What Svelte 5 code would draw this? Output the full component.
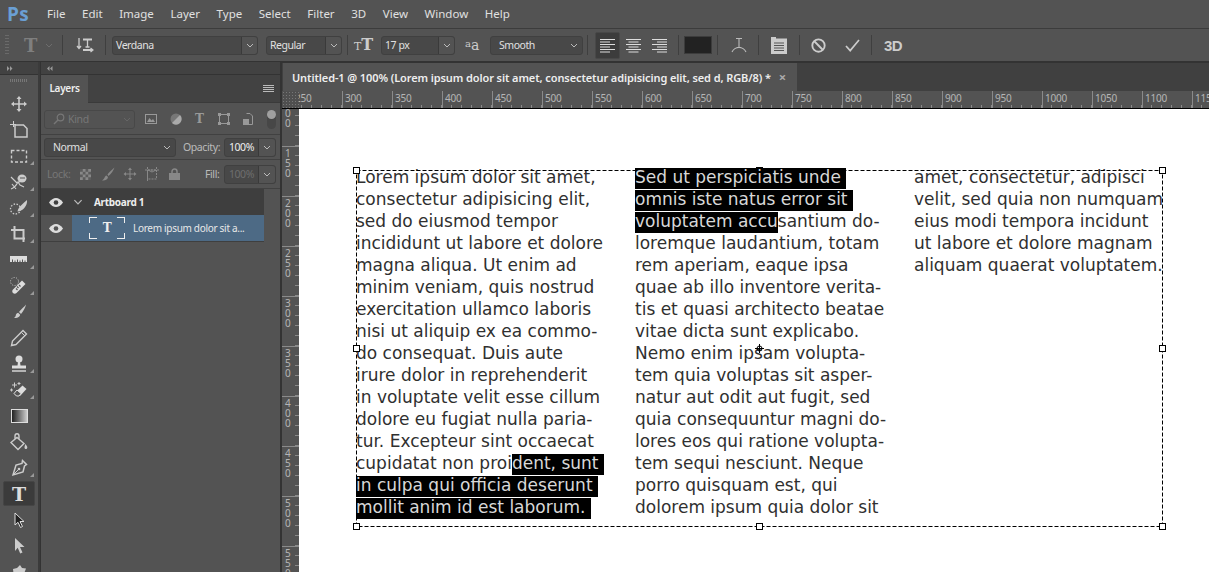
<script>
  const menus = ['File','Edit','Image','Layer','Type','Select','Filter','3D','View','Window','Help'];
  const hTicks = [250,300,350,400,450,500,550,600,650,700,750,800,850,900,950,1000,1050,1100,1150];
  const vTicks = ['100','150','200','250','300','350','400','450','500','550'];
  const columns = [
    [
      ['Lorem ipsum dolor sit amet,'],['consectetur adipisicing elit,'],['sed do eiusmod tempor'],['incididunt ut labore et dolore'],
      ['magna aliqua. Ut enim ad'],['minim veniam, quis nostrud'],['exercitation ullamco laboris'],['nisi ut aliquip ex ea commo-'],
      ['do consequat. Duis aute'],['irure dolor in reprehenderit'],['in voluptate velit esse cillum'],['dolore eu fugiat nulla paria-'],
      ['tur. Excepteur sint occaecat'],['cupidatat non proi','dent, sunt '],['','in culpa qui officia deserunt '],['','mollit anim id est laborum. ']
    ],
    [
      ['','Sed ut perspiciatis unde '],['','omnis iste natus error sit '],['','voluptatem accu','santium do-'],['loremque laudantium, totam'],
      ['rem aperiam, eaque ipsa'],['quae ab illo inventore verita-'],['tis et quasi architecto beatae'],['vitae dicta sunt explicabo.'],
      ['Nemo enim ipsam volupta-'],['tem quia voluptas sit asper-'],['natur aut odit aut fugit, sed'],['quia consequuntur magni do-'],
      ['lores eos qui ratione volupta-'],['tem sequi nesciunt. Neque'],['porro quisquam est, qui'],['dolorem ipsum quia dolor sit']
    ],
    [
      ['amet, consectetur, adipisci'],['velit, sed quia non numquam'],['eius modi tempora incidunt'],['ut labore et dolore magnam'],['aliquam quaerat voluptatem.']
    ]
  ];
  const handles = [[57.5,61.5],[460.5,61.5],[863.5,61.5],[57.5,239.5],[863.5,239.5],[57.5,417.5],[460.5,417.5],[863.5,417.5]];
</script>

<div class="app">
  <header class="menubar">
    <span class="logo">Ps</span>
    <nav class="menus">
      {#each menus as m}<span>{m}</span>{/each}
    </nav>
  </header>

  <div class="options">
    <span class="grip"></span>
    <span class="o-tool">T</span>
    <svg class="chev faded o-chev" viewBox="0 0 8 5"><path d="M1 1l3 3 3-3"/></svg>
    <i class="sep s1"></i>
    <svg class="o-orient" width="18" height="18" viewBox="0 0 18 18"><path d="M3 2v10M1 10l2 2.500L5 10M11.500 3v8M9.500 11h4" fill="none" stroke="#ccc" stroke-width="1.300"/><path d="M7 3.500h9M7 14h9" fill="none" stroke="#ccc" stroke-width="2"/><path d="M14.500 12l2.500 2-2.500 2" fill="none" stroke="#ccc" stroke-width="1.200"/></svg>
    <i class="sep s2"></i>
    <div class="select font"><span>Verdana</span><b><svg class="chev" viewBox="0 0 8 5"><path d="M1 1l3 3 3-3"/></svg></b></div>
    <div class="select style"><span>Regular</span><b><svg class="chev" viewBox="0 0 8 5"><path d="M1 1l3 3 3-3"/></svg></b></div>
    <i class="sep s3"></i>
    <span class="o-size"><small>T</small>T</span>
    <div class="select size"><span>17 px</span><b><svg class="chev" viewBox="0 0 8 5"><path d="M1 1l3 3 3-3"/></svg></b></div>
    <span class="o-aa"><small>a</small>a</span>
    <div class="select smooth"><span>Smooth</span><svg class="chev" viewBox="0 0 8 5"><path d="M1 1l3 3 3-3"/></svg></div>
    <i class="sep s4"></i>
    <div class="align active"><svg width="15" height="15" viewBox="0 0 15 15"><path d="M0 1.500h15M0 4h10M0 6.500h15M0 9h10M0 11.500h15M0 14h10"/></svg></div>
    <div class="align"><svg width="15" height="15" viewBox="0 0 15 15"><path d="M0 1.500h15M2.500 4h10M0 6.500h15M2.500 9h10M0 11.500h15M2.500 14h10"/></svg></div>
    <div class="align"><svg width="15" height="15" viewBox="0 0 15 15"><path d="M0 1.500h15M5 4h10M0 6.500h15M5 9h10M0 11.500h15M5 14h10"/></svg></div>
    <i class="sep s5"></i>
    <span class="swatch"></span>
    <i class="sep s6"></i>
    <svg class="o-warp" width="16" height="20" viewBox="0 0 16 20"><path d="M5 3.500h6M8 3.500v9M6 12.500h4M1 17c2-4 4-4.500 7-4.500s5 .5 7 4.500" fill="none" stroke="#bbb" stroke-width="1.100"/></svg>
    <i class="sep s7"></i>
    <svg class="o-panel" width="16" height="17" viewBox="0 0 16 17"><path d="M0 0h5v1.500h11V17H0z" fill="#ccc"/><path d="M3 6h10M3 8.500h10M3 11h10M3 13.500h10" stroke="#555" stroke-width="1"/></svg>
    <i class="sep s8"></i>
    <svg class="o-cancel" width="15" height="15" viewBox="0 0 16 16"><circle cx="8" cy="8" r="6.600" fill="none" stroke="#ccc" stroke-width="2"/><path d="M3.500 3.500l9 9" stroke="#ccc" stroke-width="2"/></svg>
    <svg class="o-check" width="15" height="13" viewBox="0 0 16 14"><path d="M1 7.500L5.500 12.500 15 1" fill="none" stroke="#ccc" stroke-width="1.800"/></svg>
    <i class="sep s9"></i>
    <span class="o-3d">3D</span>
  </div>

  <div class="body">
    <aside class="rail">
      <div class="strip"><svg width="6" height="5" viewBox="0 0 6 5"><path d="M0 0l2.500 2.500L0 5zM3 0l2.500 2.500L3 5z" fill="#999"/></svg></div>
      <div class="rail-grip"></div>
      <div class="tool"><svg viewBox="0 0 20 20"><path d="M10 2l2.500 3h-1.700v4.200H15V7.500l3 2.500-3 2.500v-1.700h-4.200V15h1.700L10 18l-2.500-3h1.700v-4.200H5v1.700L2 10l3-2.500v1.700h4.200V5H7.500z" fill="#ccc"/></svg></div>
      <div class="tool"><svg viewBox="0 0 20 20"><path d="M6 5h8.500L18 8.500V17H6z" fill="none" stroke="#ccc" stroke-width="1.500"/><path d="M1 4.500h6M4.500 1v6" stroke="#ccc"/></svg></div>
      <div class="tool more"><svg viewBox="0 0 20 20"><rect x="2.500" y="4.500" width="15" height="11.500" fill="none" stroke="#ccc" stroke-width="1.400" stroke-dasharray="3 2"/></svg></div>
      <div class="tool more"><svg viewBox="0 0 20 20"><ellipse cx="13" cy="6.500" rx="4.500" ry="4" fill="#ccc"/><path d="M11 6h5" stroke="#555"/><path d="M2 5l6 6 4-2M2 17c3-1 5-3 7-7l2 3 4 2M3 12l4 5" fill="none" stroke="#ccc" stroke-width="1.200"/></svg></div>
      <div class="tool more"><svg viewBox="0 0 20 20"><circle cx="6.500" cy="11" r="5" fill="none" stroke="#ccc" stroke-width="1.300" stroke-dasharray="1.500 1.500"/><path d="M18 2c.5 4-2 8-5 10-1.500 1-3 1-4.500 1.500.5-2 1-3.500 3-5.500 2-2 4-4 6.500-6z" fill="#ccc"/></svg></div>
      <div class="tool more"><svg viewBox="0 0 20 20"><path d="M2 6h4M5.500 2v12.500H16M6 6h8.500v12" fill="none" stroke="#ccc" stroke-width="2"/></svg></div>
      <div class="tool more"><svg viewBox="0 0 20 20"><path d="M1 6h17v6H1z" fill="#ddd"/><path d="M3.500 9.500V12M6 10.500V12M8.500 9.500V12M11 10.500V12M13.500 9.500V12M16 10.500V12" stroke="#555" stroke-width="1"/></svg></div>
      <div class="tool more"><svg viewBox="0 0 20 20"><circle cx="5.500" cy="5.500" r="4" fill="none" stroke="#ccc" stroke-dasharray="1 1.500"/><path d="M13 4.500l3.500 3.500-9 9c-1 1-2.500 1-3.500 0s-1-2.500 0-3.500z" fill="#ddd"/><path d="M8 10.500l1.500 1.500M10 9l1.500 1.500M7 12.500l1.500 1.500" stroke="#555" stroke-width="1.200"/></svg></div>
      <div class="tool"><svg viewBox="0 0 20 20"><path d="M17 2.500c-1.500 2-5 5-7 7.500l2 2c2-2.500 4.500-6.500 5-9.500zM9.200 10.800c-2 .5-2.200 1.800-2.500 3-.2 1-1 1.700-1.700 2 2.500.8 6-.5 6.200-3z" fill="#ccc"/></svg></div>
      <div class="tool"><svg viewBox="0 0 20 20"><path d="M14 2.500l3.500 3.500L7 16.500 2.500 17.500l1-4.500z" fill="none" stroke="#ccc" stroke-width="1.400"/><path d="M12.500 4.500L16 8" stroke="#ccc"/></svg></div>
      <div class="tool more"><svg viewBox="0 0 20 20"><circle cx="10" cy="5" r="3.500" fill="#ddd"/><path d="M9 8h2l.5 3.500H17v3H3v-3h5.500z" fill="#ddd"/><path d="M3 17h14" stroke="#ddd" stroke-width="1.400"/></svg></div>
      <div class="tool more"><svg viewBox="0 0 20 20"><path d="M13.500 5.500l4 3.500-6.500 7H7.500l-2.500-2.500z" fill="#ddd"/><path d="M5 13.500l3-3.500 4 3.500-2 2.500H7.500z" fill="#555" stroke="#ddd"/><path d="M3 5h5M5.500 2.500v5M1 10h3M2.500 8.500v3M10 2v3M8.500 3.500h3" stroke="#ccc"/></svg></div>
      <div class="tool"><span class="gradient"></span></div>
      <div class="tool"><svg viewBox="0 0 20 20"><path d="M8 5.500l7 6-6 6-7-7zM6 7.500V4c0-3 4-3 4 0v3" fill="none" stroke="#ccc" stroke-width="1.400"/><path d="M16.500 12c1 1.500 2.500 3 1.500 4.500-1 1-2.500.5-2.500-1 0-1 .5-2.500 1-3.500z" fill="#ccc"/></svg></div>
      <div class="tool more"><svg viewBox="0 0 20 20"><path d="M13.500 2.500l4 4-2 1.500-1.500 6L4 17l3-10 6-1.500z" fill="none" stroke="#ccc" stroke-width="1.500"/><path d="M5 16l4.500-4.500" stroke="#ccc"/><circle cx="10" cy="11" r="1.300" fill="#ccc"/></svg></div>
      <div class="tool current"><span>T</span></div>
      <div class="tool"><svg viewBox="0 0 20 20"><path d="M6 3l9 8.500h-4l2.500 5-2 1-2.500-5.200L6 15z" fill="#222" stroke="#ddd"/></svg></div>
      <div class="tool"><svg viewBox="0 0 20 20"><path d="M6 2l9.500 9h-4.500l2.500 5.500-2.300 1-2.500-5.700L6 15z" fill="#ccc"/></svg></div>
      <div class="tool"><svg viewBox="0 0 20 20"><path d="M4 7l4-1 3-3 2 3 4 .5-1.500 4L17 14l-4 .5-2.500 3-3-2.500-4 .5 1-4z" fill="#ccc"/></svg></div>
    </aside>

    <section class="panel-col">
      <div class="strip"><svg width="6" height="5" viewBox="0 0 6 5"><path d="M2.500 0L0 2.500 2.500 5zM5.500 0L3 2.500 5.500 5z" fill="#999"/></svg></div>
      <div class="panel">
        <div class="tabs">
          <span class="ptab">Layers</span>
          <span class="hamburger"></span>
        </div>
        <div class="row filter">
          <div class="kind"><svg width="12" height="12" viewBox="0 0 12 12"><circle cx="7.500" cy="4.500" r="3.300" fill="none" stroke="#777" stroke-width="1.200"/><path d="M5 7l-4 4" stroke="#777" stroke-width="1.500"/></svg><span>Kind</span><svg class="chev kindchev" viewBox="0 0 8 5"><path d="M1 1l3 3 3-3"/></svg></div>
          <svg class="fi f-img" width="12" height="10" viewBox="0 0 12 10"><rect x=".5" y=".5" width="11" height="9" fill="none" stroke="#999"/><path d="M2 8l2.500-4 2 2.500 1.500-1.500 2 3z" fill="#999"/></svg>
          <svg class="fi f-adj" width="12" height="12" viewBox="0 0 12 12"><circle cx="6" cy="6" r="5.500" fill="#777"/><path d="M10 2a5.500 5.500 0 0 1-8 8z" fill="#aaa"/></svg>
          <span class="fi f-t">T</span>
          <svg class="fi f-tr" width="12" height="12" viewBox="0 0 12 12"><rect x="1.500" y="1.500" width="9" height="9" fill="none" stroke="#999"/><path d="M0 0h3v3H0zM9 0h3v3H9zM0 9h3v3H0zM9 9h3v3H9z" fill="#999"/></svg>
          <svg class="fi f-doc" width="10" height="12" viewBox="0 0 10 12"><path d="M3.500.5h3.500l2.500 2.500v8.500h-6" fill="none" stroke="#999"/><rect y="6" width="6" height="6" fill="#999"/></svg>
          <span class="toggle"></span>
        </div>
        <div class="row mode">
          <div class="select blend"><span>Normal</span><svg class="chev" viewBox="0 0 8 5"><path d="M1 1l3 3 3-3"/></svg></div>
          <span class="label opac">Opacity:</span>
          <div class="select pct"><span>100%</span><b><svg class="chev" viewBox="0 0 8 5"><path d="M1 1l3 3 3-3"/></svg></b></div>
        </div>
        <div class="row lock">
          <span class="label dim">Lock:</span>
          <span class="checker"></span>
          <svg class="li l-brush" width="14" height="14" viewBox="0 0 14 14"><path d="M13.500.5C11 3 8 5 6.500 7.500l1 1.500C10 7 12.500 3.500 13.500.5zM5.500 8.500c-2 .5-1.500 3-4.500 5 3 .5 6-1 6-3.500z" fill="#888"/></svg>
          <svg class="li l-move" width="14" height="14" viewBox="0 0 14 14"><path d="M7 .5l2 2.500H7.500v3.500H11V5l2.500 2L11 9V7.500H7.500V11H9l-2 2.500L5 11h1.500V7.500H3V9L.5 7 3 5v1.500h3.500V3H5z" fill="#888"/></svg>
          <svg class="li l-art" width="14" height="14" viewBox="0 0 14 14"><path d="M2.500 3h9v9h-9zM0 3h14M2.500 0v14M11.500 0v3" fill="none" stroke="#888" stroke-dasharray="2 1"/><path d="M3 3l4 2 4-2" stroke="#888" fill="none"/></svg>
          <svg class="li l-lock" width="11" height="12" viewBox="0 0 11 12"><path d="M3 5V3.500a2.500 2.500 0 0 1 5 0V5" fill="none" stroke="#888" stroke-width="1.500"/><rect y="5" width="11" height="7" fill="#888"/></svg>
          <span class="label fill">Fill:</span>
          <div class="select pct faint"><span>100%</span><b><svg class="chev" viewBox="0 0 8 5"><path d="M1 1l3 3 3-3"/></svg></b></div>
        </div>
        <div class="list">
          <div class="layers">
            <div class="layer artboard">
              <div class="eyecol"><svg width="14" height="9" viewBox="0 0 14 9"><path d="M0 4.500C2 1.500 4.500 0 7 0s5 1.500 7 4.500C12 7.500 9.500 9 7 9S2 7.500 0 4.500z" fill="#ddd"/><circle cx="7" cy="4.500" r="2.300" fill="#3e3e3e"/></svg></div>
              <svg class="chev artchev" viewBox="0 0 8 5"><path d="M1 1l3 3 3-3"/></svg>
              <span>Artboard 1</span>
            </div>
            <div class="layer text-layer">
              <div class="eyecol"><svg width="14" height="9" viewBox="0 0 14 9"><path d="M0 4.500C2 1.500 4.500 0 7 0s5 1.500 7 4.500C12 7.500 9.500 9 7 9S2 7.500 0 4.500z" fill="#ddd"/><circle cx="7" cy="4.500" r="2.300" fill="#535353"/></svg></div>
              <div class="selected">
                <div class="thumb"><span>T</span></div>
                <span class="lname">Lorem ipsum dolor sit a...</span>
              </div>
            </div>
          </div>
          <div class="scroll"></div>
        </div>
      </div>
    </section>

    <main class="doc">
      <div class="tabbar">
        <div class="dtab"><span>Untitled-1 @ 100% (Lorem ipsum dolor sit amet, consectetur adipisicing elit, sed d, RGB/8) *</span><em>×</em></div>
      </div>
      <div class="hruler-row">
        <div class="corner"></div>
        <div class="hruler">
          {#each hTicks as t}<span>{t}</span>{/each}
        </div>
      </div>
      <div class="work">
        <div class="vruler">
          {#each vTicks as t}
            <div class="vcell">{#each t.split('') as d}<span>{d}</span>{/each}</div>
          {/each}
        </div>
        <div class="canvas">
          <div class="textframe">
            {#each columns as col}
              <div class="column">
                {#each col as line}
                  <div class="line">{line[0]}{#if line[1]}<span class="sel">{line[1]}</span>{/if}{#if line[2]}{line[2]}{/if}</div>
                {/each}
              </div>
            {/each}
          </div>
          <svg class="overlay" width="910" height="463" viewBox="0 0 910 463">
            <rect x="57.5" y="61.500" width="806" height="356" fill="none" stroke="#000" stroke-dasharray="4 2"/>
            {#each handles as h}
              <rect x={h[0]-3} y={h[1]-3} width="6" height="6" fill="#fff" stroke="#000"/>
            {/each}
            <circle cx="460.500" cy="239.500" r="2.500" fill="none" stroke="#000"/>
            <path d="M460.500 235v9M456 239.500h9" stroke="#000"/>
          </svg>
        </div>
      </div>
    </main>
  </div>
</div>

<style>
  :global(body) { margin: 0; background: #535353; }
  .app { width: 1209px; height: 572px; overflow: hidden; display: flex; flex-direction: column; background: #535353; font-family: "Noto Sans", "Open Sans", sans-serif; color: #ddd; }
  .menubar { height: 28px; flex: none; display: flex; align-items: center; border-bottom: 1px solid #3c3c3c; box-sizing: content-box; }
  .logo { width: 47px; box-sizing: border-box; padding-left: 7px; font: 700 19px "Open Sans", sans-serif; color: #6a9fd4; letter-spacing: .3px; }
  .menus { display: flex; gap: 16.600px; font-size: 11.500px; color: #e0e0e0; padding-bottom: 2px; }
  .options { height: 32px; flex: none; display: flex; align-items: center; border-bottom: 1px solid #333; position: relative; }
  .grip { width: 4px; height: 20px; margin-left: 5px; background: repeating-linear-gradient(#6a6a6a 0 1px, transparent 1px 3px); }
  .o-tool { margin-left: 15px; width: 14px; font: 700 18px "DejaVu Serif", serif; color: #7f7f7f; }
  .chev { width: 8px; height: 5px; fill: none; stroke: #bbb; stroke-width: 1; flex: none; }
  .chev.faded { stroke: #6d6d6d; }
  .o-chev { margin-left: 7px; }
  .sep { display: block; width: 1px; height: 20px; background: #3f3f3f; flex: none; }
  .s1 { margin-left: 9px; }
  .o-orient { margin-left: 13px; }
  .s2 { margin-left: 11px; }
  .select { display: flex; align-items: center; height: 19px; box-sizing: border-box; border: 1px solid #404040; border-radius: 3px; background: #484848; font-size: 10.500px; letter-spacing: -.45px; color: #e0e0e0; flex: none; }
  .select span { flex: 1; padding-left: 3px; }
  .select b { width: 16px; height: 100%; border-left: 1px solid #3a3a3a; display: flex; align-items: center; justify-content: center; box-sizing: border-box; background: #535353; border-radius: 0 3px 3px 0; }
  .font { width: 146px; margin-left: 6px; }
  .style { width: 76px; margin-left: 8px; }
  .s3 { margin-left: 5px; }
  .o-size { margin-left: 6px; width: 20px; font: 700 16px "DejaVu Serif", serif; color: #ccc; white-space: nowrap; line-height: 20px; padding-top: 1px; }
  .o-size small { font-size: 11px; font-weight: 400; }
  .size { width: 74px; margin-left: 7px; }
  .o-aa { margin-left: 10px; width: 15px; font: 400 14px "DejaVu Serif", serif; color: #ccc; white-space: nowrap; }
  .o-aa small { font-size: 10px; vertical-align: 3px; }
  .smooth { width: 93px; margin-left: 10px; padding-right: 4px; }
  .smooth span { padding-left: 8px; }
  .s4 { margin-left: 4px; }
  .align { width: 25px; height: 27px; display: flex; align-items: center; justify-content: center; box-sizing: border-box; border: 1px solid transparent; flex: none; border-radius: 2px; margin-left: 1px; }
  .align path { stroke: #ddd; fill: none; stroke-width: 1; }
  .align.active { background: #3c3c3c; border-color: #484848; margin-left: 7px; }
  .s5 { margin-left: 6px; }
  .swatch { width: 28px; height: 18px; margin-left: 5px; background: #222; border: 1px solid #3c3c3c; box-sizing: border-box; }
  .s6 { margin-left: 5px; }
  .o-warp { margin-left: 13px; }
  .s7 { margin-left: 11px; }
  .o-panel { margin-left: 12px; }
  .s8 { margin-left: 12px; }
  .o-cancel { margin-left: 11px; }
  .o-check { margin-left: 19px; }
  .s9 { margin-left: 11px; }
  .o-3d { margin-left: 12px; font: 700 15px "Liberation Sans", sans-serif; color: #ccc; letter-spacing: -.5px; }

  .body { flex: 1; display: flex; min-height: 0; background: #333; }
  .strip { height: 12px; background: #424242; border-bottom: 1px solid #333; display: flex; align-items: center; padding-left: 7px; }
  .rail { width: 38px; flex: none; background: #535353; border-right: 2px solid #3b3b3b; }
  .rail .strip { padding-left: 7px; }
  .rail-grip { height: 3px; margin: 4px 10px 0; background: repeating-linear-gradient(90deg, #777 0 1px, transparent 1px 2px); }
  .tool { height: 26px; display: flex; align-items: center; justify-content: center; position: relative; }
  .tool svg { width: 20px; height: 20px; }
  .rail-grip + .tool { margin-top: 9px; }
  .more::after { content: ""; position: absolute; right: 4px; bottom: 4px; border-style: solid; border-width: 0 0 4px 4px; border-color: transparent transparent #999 transparent; }
  .gradient { width: 15px; height: 12px; border: 1px solid #ddd; background: linear-gradient(90deg, #222, #ccc); }
  .current { margin: 0 3px; background: #3b3b3b; border: 1px solid #454545; box-sizing: border-box; border-radius: 2px; height: 25px; margin-bottom: 1px; }
  .current span { font: 700 19px "DejaVu Serif", serif; color: #ddd; }

  .panel-col { width: 239px; flex: none; display: flex; flex-direction: column; margin-left: 1px; }
  .panel-col .strip { padding-left: 6px; }
  .panel { flex: 1; display: flex; flex-direction: column; background: #535353; }
  .tabs { height: 28px; flex: none; display: flex; justify-content: space-between; align-items: center; background: #424242; border-bottom: 1px solid #3a3a3a; box-sizing: border-box; }
  .ptab { height: 28px; width: 47px; box-sizing: border-box; padding-bottom: 2px; background: #535353; font-size: 10px; letter-spacing: -.3px; font-weight: 600; color: #eee; display: flex; align-items: center; justify-content: center; }
  .hamburger { width: 11px; height: 7px; margin-right: 6px; background: repeating-linear-gradient(#bbb 0 1px, transparent 1px 2px); }
  .row { display: flex; align-items: center; flex: none; position: relative; border-bottom: 1px solid #414141; box-sizing: border-box; }
  .filter { height: 32px; padding: 1px 0 0 3px; }
  .kind { width: 91px; height: 19px; box-sizing: border-box; border: 1px solid #484848; border-radius: 3px; display: flex; align-items: center; padding-left: 8px; gap: 3px; font-size: 10.500px; letter-spacing: -.3px; color: #777; }
  .kindchev { margin-left: auto; margin-right: 3px; stroke: #666; }
  .f-img { margin-left: 10px; }
  .f-adj { margin-left: 13px; }
  .f-t { margin-left: 13px; font: 700 12px "DejaVu Serif", serif; color: #999; width: 10px; }
  .f-tr { margin-left: 13px; }
  .f-doc { margin-left: 13px; }
  .toggle { width: 9px; height: 19px; margin-left: 14px; border-radius: 5px; background: #474747; position: relative; }
  .toggle::before { content: ""; position: absolute; left: 0; top: 0; width: 9px; height: 9px; border-radius: 50%; background: #a0a0a0; }
  .mode { height: 25px; padding-left: 3px; }
  .blend { width: 132px; padding-right: 4px; }
  .blend span { padding-left: 8px; }
  .label { font-size: 10.500px; letter-spacing: -.4px; color: #bbb; }
  .opac { margin-left: 7px; width: 41px; }
  .pct { width: 52px; margin-left: 0; background: #484848; }
  .pct span { padding-left: 4px; color: #eee; }
  .pct b { width: 17px; }
  .lock { height: 29px; padding-left: 6px; }
  .dim { color: #777; width: 28px; }
  .checker { width: 11px; height: 11px; margin-left: 5px; background: conic-gradient(#888 25%, #5c5c5c 0 50%, #888 0 75%, #5c5c5c 0) 0 0/5.500px 5.500px; }
  .l-brush { margin-left: 10px; }
  .l-move { margin-left: 8px; }
  .l-art { margin-left: 8px; }
  .l-lock { margin-left: 10px; }
  .fill { margin-left: 25px; width: 19px; }
  .faint span { color: #6e6e6e; }
  .list { flex: 1; display: flex; min-height: 0; }
  .layers { width: 223px; flex: none; }
  .scroll { flex: 1; }
  .layer { display: flex; align-items: center; font-size: 10px; letter-spacing: -.3px; }
  .eyecol { width: 31px; flex: none; display: flex; justify-content: center; padding-right: 1px; box-sizing: border-box; }
  .artboard { height: 26px; background: #3e3e3e; font-weight: 700; color: #eee; }
  .artchev { width: 10px; height: 6px; margin-left: 1px; margin-right: 11px; }
  .text-layer { height: 26px; border-bottom: 1px solid #3f3f3f; box-sizing: content-box; }
  .selected { flex: 1; height: 100%; background: #4d6a85; display: flex; align-items: center; margin-left: 0; color: #e8e8e8; }
  .thumb { width: 36px; height: 22px; margin-left: 17px; margin-right: 8px; display: flex; align-items: center; justify-content: center; position: relative; font: 700 12px "DejaVu Serif", serif; color: #eee; background:
    linear-gradient(#eee,#eee) 0 0/8px 1px no-repeat, linear-gradient(#eee,#eee) 0 0/1px 6px no-repeat,
    linear-gradient(#eee,#eee) 100% 0/8px 1px no-repeat, linear-gradient(#eee,#eee) 100% 0/1px 6px no-repeat,
    linear-gradient(#eee,#eee) 0 100%/8px 1px no-repeat, linear-gradient(#eee,#eee) 0 100%/1px 6px no-repeat,
    linear-gradient(#eee,#eee) 100% 100%/8px 1px no-repeat, linear-gradient(#eee,#eee) 100% 100%/1px 6px no-repeat; }
  .lname { white-space: nowrap; }

  .doc { flex: 1; min-width: 0; display: flex; flex-direction: column; margin-left: 2px; background: #3c3c3c; }
  .tabbar { height: 29px; flex: none; background: #404040; border-top: 1px solid #333; box-sizing: border-box; padding-left: 1px; }
  .dtab { width: 514px; height: 28px; background: #535353; display: flex; align-items: center; padding-left: 9px; box-sizing: border-box; font-size: 11px; letter-spacing: -.1px; font-weight: 600; color: #eee; white-space: nowrap; }
  .dtab em { font-style: normal; margin-left: 8px; color: #aaa; font-weight: 700; font-size: 13px; }
  .hruler-row { height: 17px; display: flex; flex: none; border-bottom: 1px solid #000; box-sizing: content-box; margin-top: 0; }
  .corner { width: 17px; flex: none; background: #4f4f4f radial-gradient(#777 .5px, transparent .6px) 0 0/3px 3px; }
  .hruler { flex: 1; display: flex; overflow: hidden; background: #535353; }
  .hruler span { width: 50px; flex: none; box-sizing: border-box; padding-left: 3px; font-size: 10px; letter-spacing: -.2px; line-height: 15px; color: #b5b5b5; background:
    linear-gradient(#8a8a8a,#8a8a8a) 0 0/1px 100% no-repeat,
    repeating-linear-gradient(90deg, transparent 0 9px, #8a8a8a 9px 10px) 0 100%/100% 3px no-repeat; }
  .hruler span:first-child { margin-left: -7px; }
  .work { flex: 1; display: flex; min-height: 0; }
  .vruler { width: 17px; flex: none; background: #535353; overflow: hidden; }
  .vcell { height: 50px; box-sizing: border-box; padding: 2px 0 0 3px; display: flex; flex-direction: column; font-size: 10px; line-height: 10px; color: #b5b5b5; background:
    linear-gradient(#8a8a8a,#8a8a8a) 0 0/100% 1px no-repeat,
    repeating-linear-gradient(transparent 0 9px, #8a8a8a 9px 10px) 100% 0/4px 100% no-repeat; }
  .vcell:first-child { margin-top: -13px; }
  .canvas { flex: 1; background: #fff; position: relative; overflow: hidden; }
  .textframe { display: grid; grid-template-columns: repeat(3, 250px); column-gap: 29px; padding: 59px 0 0 57px; font: 17px/18px "DejaVu Sans", Verdana, sans-serif; color: #303030; white-space: pre; }
  .line { height: 22px; }
  .sel { display: inline-block; height: 21px; background: #000; color: #d8d8d8; vertical-align: top; position: relative; z-index: 2; }
  .overlay { position: absolute; left: 0; top: 0; z-index: 1; }
</style>
